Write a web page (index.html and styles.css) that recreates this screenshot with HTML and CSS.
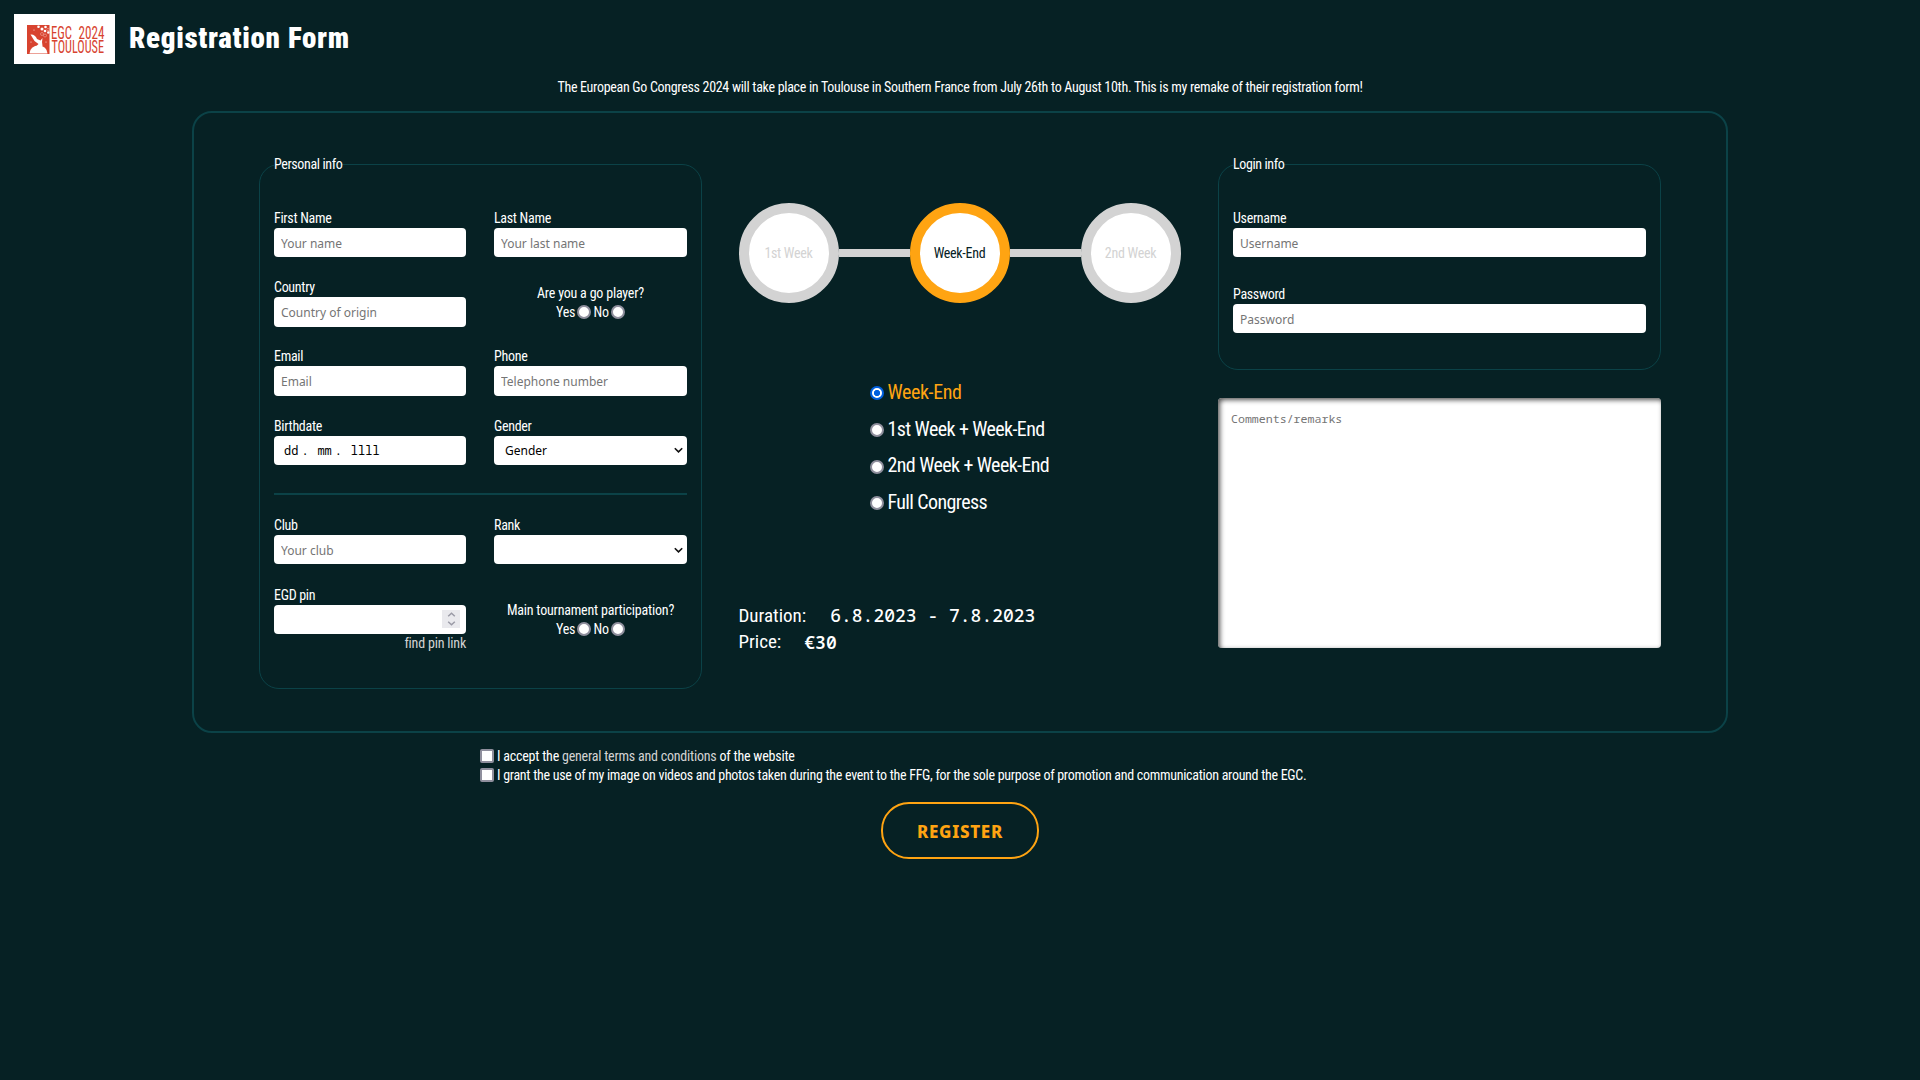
FILE: index.html
```html
<!DOCTYPE html>
<html lang="en">
<head>
<meta charset="utf-8">
<title>Registration Form</title>
<link rel="stylesheet" href="styles.css">
</head>
<body>
<header class="header">
  <svg class="logo" viewBox="0 0 101 50" role="img" aria-label="EGC 2024 Toulouse">
    <rect width="101" height="50" fill="#fff"/>
    <rect x="13" y="11" width="22.500" height="29" fill="#d8432f"/>
    <path d="M15.500 39.500a9 8 0 0 1 18 0z" fill="#fff"/>
    <path d="M16.500 20.500q4.500-.5 6.500 4.500l3.500 1.500 2-2.500-.5 4 .5 4h-6l2-2-4-3z" fill="#fff"/>
    <g fill="#fff"><circle cx="24.500" cy="12.800" r="1.300"/><circle cx="28" cy="15" r="1.500"/><circle cx="31.500" cy="13" r="1.300"/><circle cx="31" cy="17" r="1.300"/><circle cx="34.300" cy="18.500" r="1.200"/><circle cx="17" cy="28" r=".5"/><circle cx="32" cy="28" r=".5"/><circle cx="20" cy="16" r=".5"/></g>
    <g fill="none" stroke="#f0a79c" stroke-width=".6"><circle cx="28" cy="20" r="1.500"/><circle cx="34" cy="15.500" r="1.200"/><circle cx="31" cy="21.500" r="1.500"/></g>
    <text class="logo-text" x="37" y="25" textLength="21" lengthAdjust="spacingAndGlyphs">EGC</text>
    <text class="logo-text" x="64.500" y="25" textLength="26" lengthAdjust="spacingAndGlyphs">2024</text>
    <text class="logo-text" x="37.500" y="39" textLength="52.500" lengthAdjust="spacingAndGlyphs">TOULOUSE</text>
  </svg>
  <h1 class="title">Registration Form</h1>
</header>
<p class="intro">The European Go Congress 2024 will take place in Toulouse in Southern France from July 26th to August 10th. This is my remake of their registration form!</p>
<form>
  <main class="panel">
    <fieldset class="group personal">
      <legend>Personal info</legend>
      <div class="fields">
        <label class="field">First Name<input class="input" type="text" placeholder="Your name"></label>
        <label class="field">Last Name<input class="input" type="text" placeholder="Your last name"></label>
        <label class="field">Country<input class="input" type="text" placeholder="Country of origin"></label>
        <div class="question">Are you a go player?
          <div class="answers">Yes<input class="radio" type="radio" name="player">No<input class="radio" type="radio" name="player"></div>
        </div>
        <label class="field">Email<input class="input" type="email" placeholder="Email"></label>
        <label class="field">Phone<input class="input" type="tel" placeholder="Telephone number"></label>
        <div class="field">Birthdate<div class="input date"><span>dd</span><span class="dot">.</span><span>mm</span><span class="dot">.</span><span>llll</span></div></div>
        <div class="field">Gender<div class="input select"><span>Gender</span><svg width="9" height="7" viewBox="0 0 9 7"><path d="M.8 1.200l3.700 3.700 3.700-3.700" fill="none" stroke="#111" stroke-width="1.600"/></svg></div></div>
      </div>
      <hr class="rule">
      <div class="fields">
        <label class="field">Club<input class="input" type="text" placeholder="Your club"></label>
        <div class="field">Rank<div class="input select"><span></span><svg width="9" height="7" viewBox="0 0 9 7"><path d="M.8 1.200l3.700 3.700 3.700-3.700" fill="none" stroke="#111" stroke-width="1.600"/></svg></div></div>
        <div class="field pin-field">EGD pin<div class="input number"><span class="spinner"><svg width="9" height="14" viewBox="0 0 9 14"><path d="M1.200 4.300l3.300-3 3.300 3M1.200 9.700l3.300 3 3.300-3" fill="none" stroke="#9a9aa6" stroke-width="1.500"/></svg></span></div><a class="link pin">find pin link</a></div>
        <div class="question">Main tournament participation?
          <div class="answers">Yes<input class="radio" type="radio" name="main">No<input class="radio" type="radio" name="main"></div>
        </div>
      </div>
    </fieldset>

    <section class="schedule">
      <div class="steps">
        <div class="step">1st Week</div><div class="bar"></div><div class="step active">Week-End</div><div class="bar"></div><div class="step">2nd Week</div>
      </div>
      <div class="options">
        <label class="option chosen"><input class="radio" type="radio" name="stay" checked>Week-End</label>
        <label class="option"><input class="radio" type="radio" name="stay">1st Week + Week-End</label>
        <label class="option"><input class="radio" type="radio" name="stay">2nd Week + Week-End</label>
        <label class="option"><input class="radio" type="radio" name="stay">Full Congress</label>
      </div>
      <div class="summary">
        <div class="line">Duration:<span class="value">6.8.2023 - 7.8.2023</span></div>
        <div class="line">Price:<span class="value price">€30</span></div>
      </div>
    </section>

    <section class="side">
      <fieldset class="group login">
        <legend>Login info</legend>
        <div class="credentials">
          <label class="field">Username<input class="input" type="text" placeholder="Username"></label>
          <label class="field">Password<input class="input" type="password" placeholder="Password"></label>
        </div>
      </fieldset>
      <textarea class="comments" placeholder="Comments/remarks"></textarea>
    </section>
  </main>

  <div class="terms">
    <label class="term accept"><input class="check" type="checkbox"><span>I accept the <a class="link">general terms and conditions</a> of the website</span></label>
    <label class="term"><input class="check" type="checkbox"><span>I grant the use of my image on videos and photos taken during the event to the FFG, for the sole purpose of promotion and communication around the EGC.</span></label>
  </div>
  <button class="register" type="button">REGISTER</button>
</form>
</body>
</html>
```
FILE: styles.css
```css
* { box-sizing: border-box; }

body {
  margin: 0;
  min-height: 100vh;
  background: #062124;
  color: #fff;
  font: 400 14px/19px "Roboto Condensed", Roboto, sans-serif;
  font-stretch: 75%;
  letter-spacing: -0.3px;
}

.header { display: flex; align-items: center; gap: 14px; padding: 14px 14px 0; }
.logo { width: 101px; height: 50px; }
.logo-text {
  font: 400 17.5px "Roboto Condensed", Roboto, sans-serif;
  letter-spacing: 0;
  fill: #d8432f;
}
.title {
  margin: 0 0 2px;
  font-size: 29px;
  line-height: 36px;
  font-weight: 900;
  letter-spacing: 0.68px;
}
.intro { margin: 14px 0 14px; text-align: center; }

.panel {
  display: grid;
  grid-template-columns: repeat(3, 443px);
  justify-content: space-between;
  width: 1536px;
  height: 622px;
  margin: 0 auto;
  padding: 42px 65px 0;
  border: 2px solid #0b4247;
  border-radius: 20px;
}

.group {
  min-width: 0;
  margin: 0;
  padding: 35px 14px 0;
  border: 1px solid #0b4247;
  border-radius: 20px;
}
.group legend { padding: 0; letter-spacing: -0.38px; }
.personal { height: 534px; }
.login { height: 215px; }

.fields { display: grid; grid-template-columns: 192px 193px; justify-content: space-between; row-gap: 20.800px; }
.field { display: flex; flex-direction: column; }
.credentials { display: grid; gap: 27.500px; }

.input {
  width: 100%;
  height: 29.450px;
  padding: 1px 7px 0;
  border: 0;
  border-radius: 4px;
  background: #fff;
  color: #000;
  font: 400 12px "Noto Sans", sans-serif;
  letter-spacing: 0;
}
.input::placeholder, .comments::placeholder { color: #757575; opacity: 1; }
.date {
  display: flex;
  align-items: center;
  padding-left: 10px;
  font-family: "Noto Sans Mono", monospace;
}
.dot { width: 7px; margin: 0 9px 0 3px; }
.select { display: flex; align-items: center; justify-content: space-between; padding: 1px 4px 0 11px; }
.number { display: flex; align-items: center; justify-content: flex-end; padding: 0 6px; }
.spinner {
  display: flex;
  align-items: center;
  justify-content: center;
  width: 18px;
  height: 18px;
  background: #e9e9ed;
}

.question { align-self: center; padding-top: 1px; text-align: center; letter-spacing: -0.2px; }
.answers { display: flex; align-items: center; justify-content: center; gap: 2.200px; }
.rule { height: 2px; margin: 27.700px 0 21px; border: 0; background: #0b4247; }
.link { color: #d3d3d3; }
.pin-field { padding-top: 0.5px; }
.pin { align-self: flex-end; letter-spacing: -0.2px; }

.radio, .check {
  appearance: none;
  flex: none;
  width: 14px;
  height: 14px;
  margin: 0;
  border: 2px solid #8f8f9d;
  background: #fff;
}
.radio { border-radius: 50%; }
.radio:checked {
  border-color: #0060df;
  background: radial-gradient(circle, #0060df 0 2.800px, #fff 3.400px);
}
.check { border-radius: 2px; margin-bottom: 1px; }

.schedule { padding-top: 48px; }
.steps { display: flex; align-items: center; width: 442px; }
.step {
  display: grid;
  place-items: center;
  width: 100px;
  height: 100px;
  border: 10px solid #d3d3d3;
  border-radius: 50%;
  background: #fff;
  color: #d3d3d3;
}
.step.active { border-color: #ffa412; color: #062124; }
.bar { flex: 1; height: 8px; background: #d3d3d3; }

.options { margin: 71px 0 0 131px; }
.option {
  display: flex;
  align-items: center;
  gap: 4px;
  height: 36.700px;
  font-size: 20px;
  letter-spacing: -0.6px;
}
.option .radio { margin-top: 2px; }
.chosen { color: #ffa412; letter-spacing: -0.4px; }

.summary { margin-top: 81px; font-size: 19px; letter-spacing: 0; }
.line { display: flex; align-items: center; height: 26.500px; }
.value {
  margin-left: 24px;
  font: 500 18px "Noto Sans Mono", monospace;
  letter-spacing: 0;
}
.price { margin-left: 23px; font-weight: 600; }

.comments {
  display: block;
  width: 100%;
  height: 250px;
  margin: 28px 0 0;
  padding: 13px;
  border: 0;
  border-radius: 4px;
  background: #fff;
  box-shadow: inset 2px 2px 5px #555;
  font: 400 11.6px/16px "Noto Sans Mono", monospace;
  letter-spacing: 0;
  resize: none;
}

.terms { width: 960px; margin: 14px auto 0; }
.term { display: flex; align-items: center; gap: 3px; letter-spacing: -0.29px; }
.accept { letter-spacing: -0.22px; }

.register {
  display: block;
  width: 158px;
  height: 57px;
  margin: 17px auto 0;
  padding: 2px 0 0;
  border: 2px solid #ffa412;
  border-radius: 28px;
  background: none;
  color: #ffa412;
  font: 800 17px "Noto Sans", sans-serif;
  letter-spacing: 0.7px;
}
```
